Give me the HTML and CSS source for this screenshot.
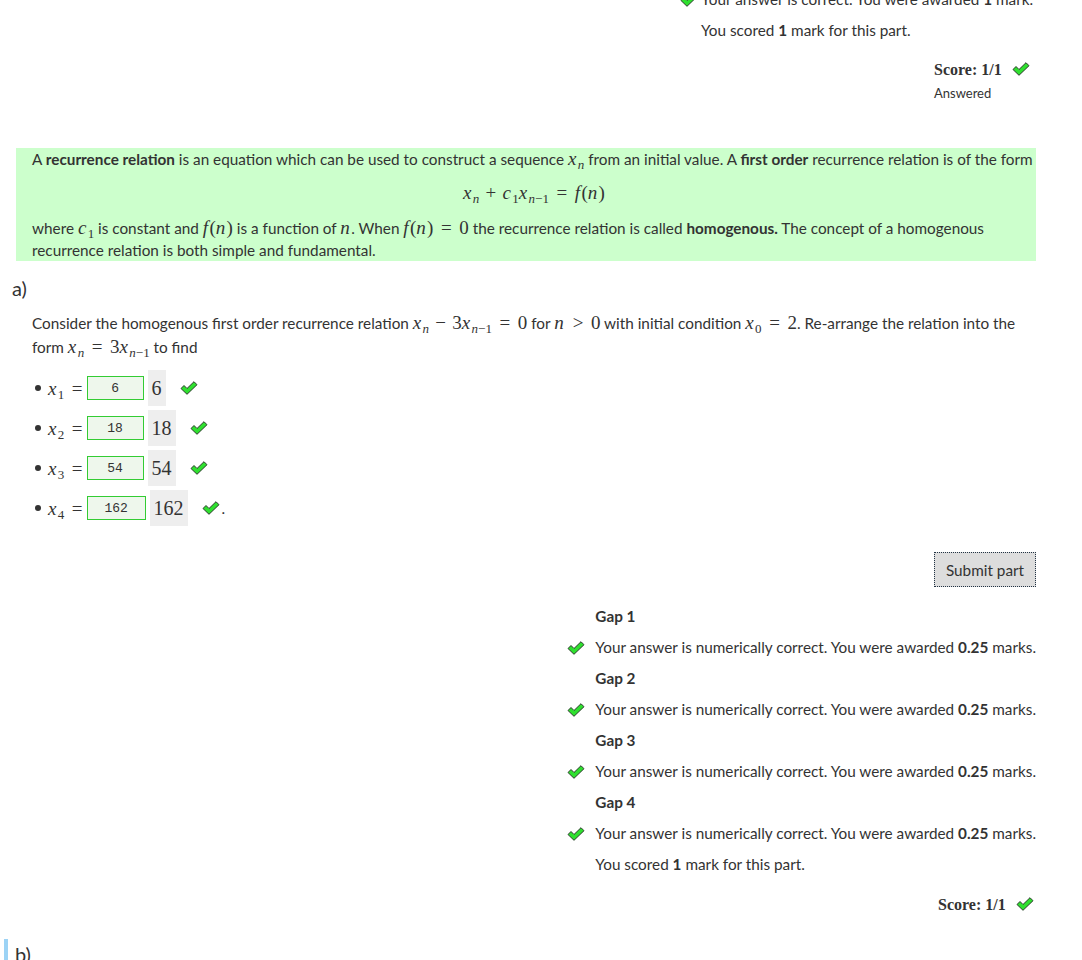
FILE: index.html
```html
<!DOCTYPE html>
<html>
<head>
<meta charset="utf-8">
<link rel="stylesheet" href="styles.css">
</head>
<body>
<div class="page">
  <div class="feedback top-feedback">
    <div class="fb-row cut"><svg class="tick" viewBox="0 0 18 14"><path d="M1 7.5 L4 4.5 L7 7.5 L14 0.7 L17 3.7 L7 13.3 Z"/></svg><span>Your answer is correct. You were awarded <b>1</b> mark.</span></div>
    <div class="fb-row plain"><span>You scored <b>1</b> mark for this part.</span></div>
  </div>

  <div class="score-block">
    <div class="score">Score: 1/1 <svg class="tick" viewBox="0 0 18 14"><path d="M1 7.5 L4 4.5 L7 7.5 L14 0.7 L17 3.7 L7 13.3 Z"/></svg></div>
    <div class="answered">Answered</div>
  </div>

  <div class="statement">
    <p class="line1">A <b>recurrence relation</b> is an equation which can be used to construct a sequence <span class="m"><i>x</i><sub><i>n</i></sub></span> from an initial value. A <b>first order</b> recurrence relation is of the form</p>
    <p class="display m"><i>x</i><sub><i>n</i></sub><span class="op">+</span><i>c</i><sub>1</sub><i>x</i><sub><i>n</i>−1</sub><span class="rel">=</span><i>f</i>(<i>n</i>)</p>
    <p>where <span class="m"><i>c</i><sub>1</sub></span> is constant and <span class="m"><i>f</i>(<i>n</i>)</span> is a function of <span class="m"><i>n</i></span>. When <span class="m"><i>f</i>(<i>n</i>)<span class="rel">=</span>0</span> the recurrence relation is called <b>homogenous.</b> The concept of a homogenous recurrence relation is both simple and fundamental.</p>
  </div>

  <section class="part">
    <h3 class="part-name">a)</h3>
    <div class="prompt">
      <p>Consider the homogenous first order recurrence relation <span class="m"><i>x</i><sub><i>n</i></sub><span class="op">−</span>3<i>x</i><sub><i>n</i>−1</sub><span class="rel">=</span>0</span> for <span class="m"><i>n</i><span class="rel">&gt;</span>0</span> with initial condition <span class="m"><i>x</i><sub>0</sub><span class="rel">=</span>2</span>. Re-arrange the relation into the form <span class="m"><i>x</i><sub><i>n</i></sub><span class="rel">=</span>3<i>x</i><sub><i>n</i>−1</sub></span> to find</p>
      <ul class="gaps">
        <li><span class="m lbl"><i>x</i><sub>1</sub><span class="rel">=</span></span><input class="gap" value="6"><span class="preview m">6</span><svg class="tick" viewBox="0 0 18 14"><path d="M1 7.5 L4 4.5 L7 7.5 L14 0.7 L17 3.7 L7 13.3 Z"/></svg></li>
        <li><span class="m lbl"><i>x</i><sub>2</sub><span class="rel">=</span></span><input class="gap" value="18"><span class="preview m">18</span><svg class="tick" viewBox="0 0 18 14"><path d="M1 7.5 L4 4.5 L7 7.5 L14 0.7 L17 3.7 L7 13.3 Z"/></svg></li>
        <li><span class="m lbl"><i>x</i><sub>3</sub><span class="rel">=</span></span><input class="gap" value="54"><span class="preview m">54</span><svg class="tick" viewBox="0 0 18 14"><path d="M1 7.5 L4 4.5 L7 7.5 L14 0.7 L17 3.7 L7 13.3 Z"/></svg></li>
        <li><span class="m lbl"><i>x</i><sub>4</sub><span class="rel">=</span></span><input class="gap wide" value="162"><span class="preview m">162</span><svg class="tick" viewBox="0 0 18 14"><path d="M1 7.5 L4 4.5 L7 7.5 L14 0.7 L17 3.7 L7 13.3 Z"/></svg><span class="dot">.</span></li>
      </ul>
    </div>

    <div class="submit-row"><button class="submit">Submit part</button></div>

    <div class="feedback gap-feedback">
      <div class="fb-row label"><span><b>Gap 1</b></span></div>
      <div class="fb-row"><svg class="tick" viewBox="0 0 18 14"><path d="M1 7.5 L4 4.5 L7 7.5 L14 0.7 L17 3.7 L7 13.3 Z"/></svg><span>Your answer is numerically correct. You were awarded <b>0.25</b> marks.</span></div>
      <div class="fb-row label"><span><b>Gap 2</b></span></div>
      <div class="fb-row"><svg class="tick" viewBox="0 0 18 14"><path d="M1 7.5 L4 4.5 L7 7.5 L14 0.7 L17 3.7 L7 13.3 Z"/></svg><span>Your answer is numerically correct. You were awarded <b>0.25</b> marks.</span></div>
      <div class="fb-row label"><span><b>Gap 3</b></span></div>
      <div class="fb-row"><svg class="tick" viewBox="0 0 18 14"><path d="M1 7.5 L4 4.5 L7 7.5 L14 0.7 L17 3.7 L7 13.3 Z"/></svg><span>Your answer is numerically correct. You were awarded <b>0.25</b> marks.</span></div>
      <div class="fb-row label"><span><b>Gap 4</b></span></div>
      <div class="fb-row"><svg class="tick" viewBox="0 0 18 14"><path d="M1 7.5 L4 4.5 L7 7.5 L14 0.7 L17 3.7 L7 13.3 Z"/></svg><span>Your answer is numerically correct. You were awarded <b>0.25</b> marks.</span></div>
      <div class="fb-row plain"><span>You scored <b>1</b> mark for this part.</span></div>
    </div>

    <div class="score-block part-score">
      <div class="score">Score: 1/1 <svg class="tick" viewBox="0 0 18 14"><path d="M1 7.5 L4 4.5 L7 7.5 L14 0.7 L17 3.7 L7 13.3 Z"/></svg></div>
    </div>
  </section>

  <section class="part part-b">
    <h3 class="part-name">b)</h3>
  </section>
</div>
</body>
</html>
```

FILE: styles.css
```css
* { box-sizing: border-box; }
html, body { margin: 0; padding: 0; background: #fff; overflow: hidden; }
body {
  font-family: Lato, "Noto Sans", sans-serif;
  font-size: 15.3px;
  color: #333;
  line-height: 23px;
}
.page { width: 1036px; }
p { margin: 0; }
b { font-weight: 700; }

.m { font-family: "Liberation Serif", "DejaVu Serif", serif; font-size: 19px; font-style: normal; white-space: nowrap; }
.m i { font-style: italic; padding-right: 0.07em; }
.m sub { font-size: 13px; vertical-align: -4px; line-height: 0; }
.m sub i { padding-right: 0; }
.m .op { margin: 0 0.33em; }
.m .rel { margin: 0 0.4em; }

.tick { width: 18px; height: 14px; flex: none; }
.tick path { fill: #2ee02e; stroke: #2a3a2a; stroke-width: 1; stroke-linejoin: round; }

/* feedback lists */
.feedback { display: flex; flex-direction: column; align-items: flex-start; margin-left: auto; width: max-content; }
.fb-row { display: flex; align-items: center; height: 31px; }
.fb-row .tick { margin-right: 10px; }
.fb-row.label, .fb-row.plain { padding-left: 28px; }
.top-feedback { margin-top: -16px; margin-left: 680px; }
.top-feedback .fb-row .tick { margin-right: 3px; }
.top-feedback .fb-row.plain { padding-left: 21px; }

/* score */
.score-block { display: flex; flex-direction: column; align-items: flex-start; margin-left: 934px; margin-top: 11px; }
.score { display: flex; align-items: center; font-family: "Liberation Serif", serif; font-weight: 700; font-size: 16px; height: 24px; }
.score .tick { margin-left: 10px; }
.answered { font-size: 13px; line-height: 24px; }

/* statement */
.statement { margin: 43px 0 0 16px; background: #ccffcc; padding: 0 0 0 16px; }
.statement p { line-height: 22px; }
.statement .line1 { white-space: nowrap; }
.statement .display { text-align: center; margin: 10px 0 11px; line-height: 26px; font-size: 19px; }

/* part */
.part { margin-left: 8px; }
.part-name { margin: 12px 0 0 4px; font-weight: 400; font-size: 20px; line-height: 30px; }
.prompt { margin-left: 24px; margin-top: 8px; }
.gaps { list-style: none; margin: 9px 0 0; padding: 0; }
.gaps li { display: flex; align-items: center; height: 40px; padding-left: 0; }
.gaps li::before { content: ""; width: 6px; height: 6px; border-radius: 50%; background: #333; margin: 0 7px 0 3px; }
.gaps .lbl .rel { margin-right: 0; }
.gap {
  width: 57px; height: 24px; border: 1px solid #3c3; background: #eef7ec;
  font-family: "Liberation Mono", monospace; font-size: 13px; color: #333;
  text-align: center; padding: 0; margin: 0 4px 0 4px;
}
.gap.wide { width: 59px; }
.preview { background: #eee; font-size: 20px; padding: 0 4px; line-height: 36px; margin-right: 14px; }
.dot { margin-left: 2px; }

.submit-row { display: flex; justify-content: flex-end; margin-top: 24px; }
.submit {
  font-family: inherit; font-size: 15.3px; color: #333;
  background: #ddd; border: 1px dotted #223344; height: 35px; width: 102px; padding: 0;
}
.gap-feedback { margin-top: 14px; }
.part-score { margin-left: 930px; margin-top: 12px; }

.part-b { border-left: 4px solid #9cd3f5; margin-left: 4px; margin-top: 23px; }
.part-b .part-name { margin: 0 0 0 7px; }
```
